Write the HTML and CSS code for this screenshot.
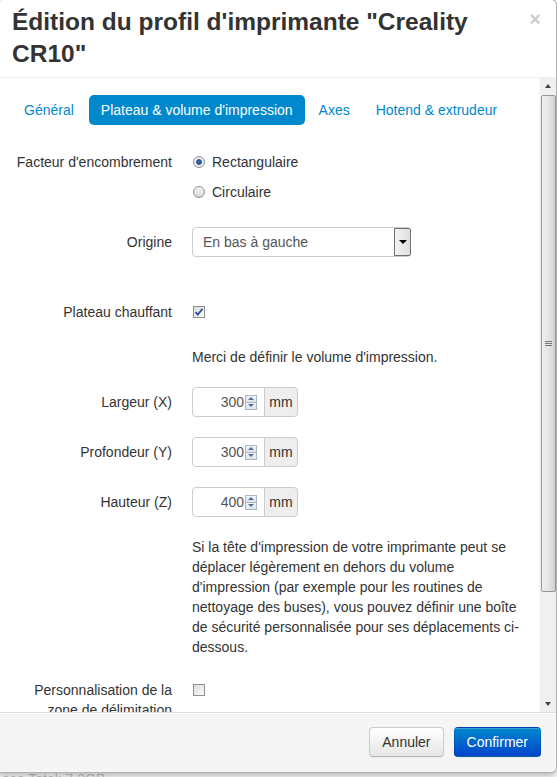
FILE: index.html
```html
<!DOCTYPE html>
<html>
<head>
    <title>Édition du profil d'imprimante</title>
    <link rel="stylesheet" href="styles.css">
</head>
<body>
    <div class="page-under">ace Total: 7.2GB</div>

    <div class="modal">
        <div class="modal-header">
            <span class="close">&times;</span>
            <h3>Édition du profil d'imprimante "Creality CR10"</h3>
        </div>

        <div class="modal-main">
            <div class="modal-body">
                <ul class="nav-pills">
                    <li><a>Général</a></li>
                    <li class="active"><a>Plateau &amp; volume d'impression</a></li>
                    <li><a>Axes</a></li>
                    <li><a>Hotend &amp; extrudeur</a></li>
                </ul>

                <form class="form-horizontal">
                    <div class="control-group">
                        <label class="control-label">Facteur d'encombrement</label>
                        <div class="controls">
                            <label class="radio"><span class="radio-box checked"></span>Rectangulaire</label>
                            <label class="radio"><span class="radio-box"></span>Circulaire</label>
                        </div>
                    </div>

                    <div class="control-group spaced">
                        <label class="control-label">Origine</label>
                        <div class="controls">
                            <div class="select">
                                <span class="select-value">En bas à gauche</span>
                                <span class="select-btn"><span class="caret"></span></span>
                            </div>
                        </div>
                    </div>

                    <div class="control-group">
                        <label class="control-label">Plateau chauffant</label>
                        <div class="controls">
                            <label class="checkbox"><span class="check-box checked">
                                <svg width="10" height="10" viewBox="0 0 10 10"><path d="M1.5 5.2 L3.8 7.6 L8.6 1.8" fill="none" stroke="#2a4d9c" stroke-width="1.8"/></svg>
                            </span></label>
                        </div>
                    </div>

                    <div class="control-group">
                        <div class="controls offset">
                            <p class="help-line">Merci de définir le volume d'impression.</p>
                        </div>
                    </div>

                    <div class="control-group">
                        <label class="control-label">Largeur (X)</label>
                        <div class="controls">
                            <div class="input-append">
                                <div class="number-input">
                                    <span class="num">300</span>
                                    <span class="spinner"><span class="up"></span><span class="down"></span></span>
                                </div>
                                <span class="add-on">mm</span>
                            </div>
                        </div>
                    </div>

                    <div class="control-group">
                        <label class="control-label">Profondeur (Y)</label>
                        <div class="controls">
                            <div class="input-append">
                                <div class="number-input">
                                    <span class="num">300</span>
                                    <span class="spinner"><span class="up"></span><span class="down"></span></span>
                                </div>
                                <span class="add-on">mm</span>
                            </div>
                        </div>
                    </div>

                    <div class="control-group">
                        <label class="control-label">Hauteur (Z)</label>
                        <div class="controls">
                            <div class="input-append">
                                <div class="number-input">
                                    <span class="num">400</span>
                                    <span class="spinner"><span class="up"></span><span class="down"></span></span>
                                </div>
                                <span class="add-on">mm</span>
                            </div>
                        </div>
                    </div>

                    <div class="control-group tight">
                        <div class="controls offset">
                            <p class="help-block">Si la tête d'impression de votre imprimante peut se déplacer légèrement en dehors du volume d'impression (par exemple pour les routines de nettoyage des buses), vous pouvez définir une boîte de sécurité personnalisée pour ses déplacements ci-dessous.</p>
                        </div>
                    </div>

                    <div class="control-group">
                        <label class="control-label">Personnalisation de la zone de délimitation</label>
                        <div class="controls">
                            <label class="checkbox"><span class="check-box"></span></label>
                        </div>
                    </div>
                </form>
            </div>

            <div class="scrollbar">
                <div class="sb-arrow"><span class="tri-up"></span></div>
                <div class="sb-thumb"><span class="grip"></span></div>
                <div class="sb-track"></div>
                <div class="sb-arrow"><span class="tri-down"></span></div>
            </div>
        </div>

        <div class="modal-footer">
            <button class="btn">Annuler</button>
            <button class="btn btn-primary">Confirmer</button>
        </div>
    </div>
</body>
</html>
```

FILE: styles.css
```css
* {
    box-sizing: border-box;
}

body {
    margin: 0;
    width: 557px;
    height: 777px;
    overflow: hidden;
    position: relative;
    background-color: #fff;
    font-family: "Liberation Sans", Arial, sans-serif;
    font-size: 14px;
    line-height: 20px;
    color: #333;
}

.page-under {
    padding: 769px 0 0 2px;
    color: #c8c8c8;
}

.modal {
    position: absolute;
    top: -1px;
    left: -4px;
    width: 561px;
    background-color: #fff;
    border: 1px solid rgba(0,0,0,0.3);
    border-radius: 6px;
    box-shadow: 0 3px 7px rgba(0,0,0,0.3);
}

.modal-header {
    padding: 6px 15px 7px;
    border-bottom: 1px solid #eee;
}

.modal-header h3 {
    margin: 0;
    font-size: 24.5px;
    line-height: 32px;
    font-weight: bold;
    color: #333;
}

.close {
    float: right;
    margin-top: 3px;
    font-size: 20px;
    line-height: 20px;
    font-weight: bold;
    color: #000;
    opacity: 0.2;
}

.modal-main {
    display: flex;
    height: 634px;
}

.modal-body {
    flex: 1;
    overflow: hidden;
    padding: 15px;
}

/* tabs */
.nav-pills {
    display: flex;
    list-style: none;
    margin: 0 0 20px;
    padding: 0;
}

.nav-pills a {
    display: block;
    padding: 8px 12px;
    margin: 2px 2px 2px 0;
    line-height: 14px;
    border-radius: 5px;
    color: #0088cc;
}

.nav-pills li:first-child a {
    margin-right: 3px;
}

.nav-pills .active a {
    background-color: #0088cc;
    color: #fff;
}

/* form */
.control-group {
    display: flex;
    margin-bottom: 20px;
}

.control-group.spaced {
    margin-bottom: 40px;
}

.control-group.tight {
    margin-bottom: 18px;
}

.control-label {
    flex: none;
    width: 160px;
    margin-right: 20px;
    padding-top: 5px;
    text-align: right;
}

.controls {
    flex: 1;
}

.controls.offset {
    margin-left: 180px;
}

.radio {
    display: flex;
    align-items: center;
    padding-top: 5px;
    margin-bottom: 5px;
    min-height: 20px;
}

.radio-box {
    width: 12px;
    height: 12px;
    margin: 0 7px 0 1px;
    border: 1px solid #8c8f94;
    border-radius: 50%;
    background: linear-gradient(#f4f4f4, #d9d9d9);
}

.radio-box.checked {
    background: radial-gradient(circle, #3d76c4 0, #1c4a91 2.4px, #e7e7e7 3.2px, #f4f4f4 100%);
}

.checkbox {
    display: flex;
    align-items: center;
    padding-top: 5px;
    min-height: 25px;
}

.check-box {
    display: flex;
    align-items: center;
    justify-content: center;
    width: 12px;
    height: 12px;
    margin-left: 1px;
    border: 1px solid #8e8f8f;
    background: linear-gradient(135deg, #dcdcdc, #fbfbfb);
}

.select {
    display: flex;
    width: 219px;
    height: 30px;
    border: 1px solid #ccc;
    border-radius: 4px;
    background-color: #fff;
    color: #555;
}

.select-value {
    flex: 1;
    padding: 4px 10px;
}

.select-btn {
    display: flex;
    align-items: center;
    justify-content: center;
    width: 17px;
    margin: 0 -1px 0 0;
    border: 1px solid #6f6f6f;
    border-radius: 0 2px 2px 0;
    background: linear-gradient(to right, #f3f3f3, #dedede);
}

.caret {
    width: 0;
    height: 0;
    border-left: 4px solid transparent;
    border-right: 4px solid transparent;
    border-top: 4px solid #000;
}

.help-line {
    margin: 0;
    padding-top: 5px;
}

.help-block {
    margin: 0;
}

/* number inputs */
.input-append {
    display: flex;
    height: 30px;
}

.number-input {
    display: flex;
    align-items: center;
    justify-content: flex-end;
    width: 73px;
    padding: 0 7px 0 6px;
    border: 1px solid #ccc;
    border-radius: 4px 0 0 4px;
    color: #555;
}

.num {
    margin-right: 1px;
}

.spinner {
    display: flex;
    flex-direction: column;
    width: 12px;
    height: 15px;
    border: 1px solid #a9b6c6;
}

.spinner span {
    flex: 1;
    display: flex;
    align-items: center;
    justify-content: center;
    background: linear-gradient(#f2f4f7, #dfe4ea);
}

.spinner .up {
    border-bottom: 1px solid #a9b6c6;
}

.spinner .up::after {
    content: "";
    border-left: 3px solid transparent;
    border-right: 3px solid transparent;
    border-bottom: 3px solid #4d6e9e;
}

.spinner .down::after {
    content: "";
    border-left: 3px solid transparent;
    border-right: 3px solid transparent;
    border-top: 3px solid #4d6e9e;
}

.add-on {
    width: 34px;
    margin-left: -1px;
    padding: 4px 0;
    text-align: center;
    background-color: #eee;
    border: 1px solid #ccc;
    border-radius: 0 4px 4px 0;
    color: #333;
}

/* scrollbar */
.scrollbar {
    display: flex;
    flex-direction: column;
    width: 17px;
    background-color: #f0f0f0;
    border-left: 1px solid #f7f7f7;
}

.sb-arrow {
    display: flex;
    align-items: center;
    justify-content: center;
    height: 16px;
}

.tri-up {
    border-left: 3.5px solid transparent;
    border-right: 3.5px solid transparent;
    border-bottom: 4px solid #444;
}

.tri-down {
    border-left: 3.5px solid transparent;
    border-right: 3.5px solid transparent;
    border-top: 4px solid #444;
}

.sb-thumb {
    display: flex;
    align-items: center;
    justify-content: center;
    height: 497px;
    margin: 1px 0 0 1px;
    border: 1px solid #979797;
    border-radius: 2px;
    background: linear-gradient(to right, #efefef, #e2e2e2 60%, #cfcfcf);
}

.grip {
    width: 7px;
    height: 5px;
    border-top: 1px solid #777;
    border-bottom: 1px solid #777;
    background: linear-gradient(transparent 1px, #777 1px, #777 2px, transparent 2px);
}

.sb-track {
    flex: 1;
}

/* footer */
.modal-footer {
    display: flex;
    justify-content: flex-end;
    padding: 14px 15px 15px;
    background-color: #f5f5f5;
    border-top: 1px solid #ddd;
    border-radius: 0 0 6px 6px;
    box-shadow: inset 0 1px 0 #fff;
}

.btn {
    margin-left: 10px;
    padding: 4px 12px;
    font-family: inherit;
    font-size: 14px;
    line-height: 20px;
    color: #333;
    background: linear-gradient(#fff, #e6e6e6);
    border: 1px solid #ccc;
    border-bottom-color: #b3b3b3;
    border-radius: 4px;
    box-shadow: inset 0 1px 0 rgba(255,255,255,0.2), 0 1px 2px rgba(0,0,0,0.05);
}

.btn-primary {
    color: #fff;
    background: linear-gradient(#0088cc, #0044cc);
    border-color: rgba(0,0,0,0.1) rgba(0,0,0,0.1) rgba(0,0,0,0.25);
}
```
